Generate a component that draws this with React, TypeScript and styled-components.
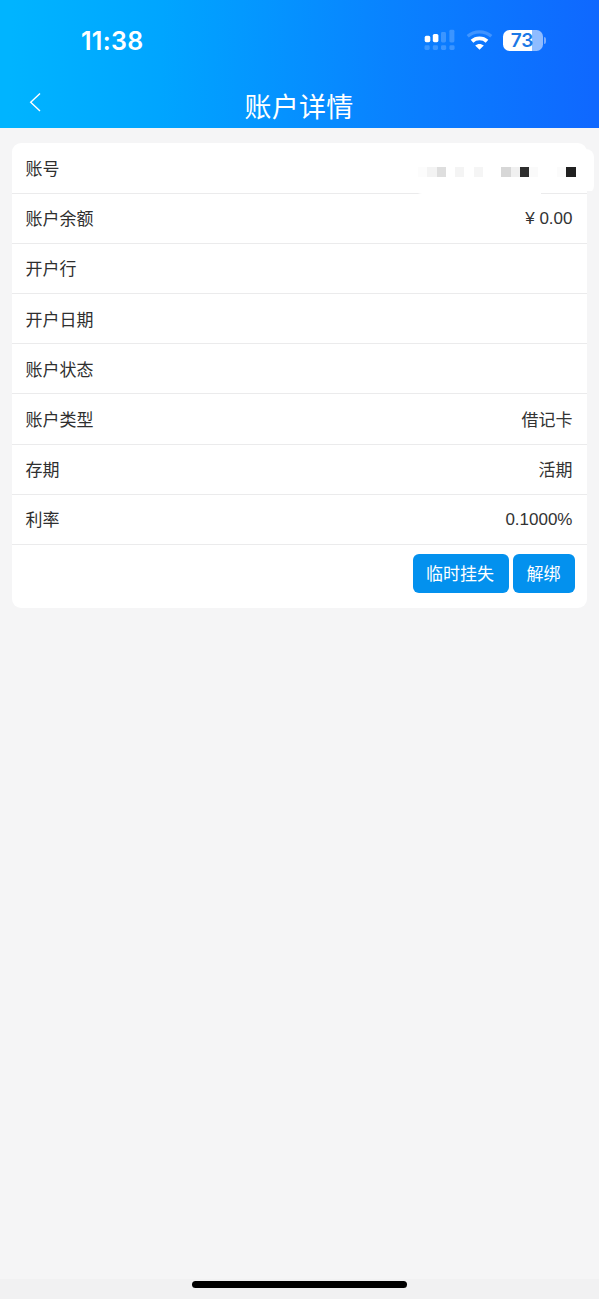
import React from 'react';
import styled, { createGlobalStyle } from 'styled-components';

const GlobalStyle = createGlobalStyle`
  * { box-sizing: border-box; }
  body {
    margin: 0;
    background: #f5f5f6;
    color: #333;
    font-family: 'Liberation Sans', 'Noto Sans CJK SC', sans-serif;
  }
`;

const Screen = styled.div`
  width: 599px;
  height: 1299px;
  display: flex;
  flex-direction: column;
  overflow: hidden;
`;

const Header = styled.header`
  height: 128px;
  flex: none;
  background: linear-gradient(92deg, #00b4ff 2%, #00a5ff 27%, #0982ff 65%, #0f68ff 99%);
  color: #fff;
`;

const StatusBar = styled.div`
  height: 82px;
  padding: 0 53px 0 81px;
  display: flex;
  align-items: center;
  justify-content: space-between;
`;

const Clock = styled.time`
  font: 600 25px/30px Inter, sans-serif;
  letter-spacing: 0.3px;
`;

const StatusIcons = styled.div`
  display: flex;
  align-items: center;
  margin-top: -2px;
`;

const SignalIcon = styled.svg`
  display: block;
  margin-right: 11px;
`;

const WifiIcon = styled.svg`
  display: block;
  margin-right: 10px;
`;

const Battery = styled.div`
  width: 40px;
  height: 21px;
  border-radius: 6.5px;
  background: linear-gradient(90deg, #fff 73%, #8fbcff 73%);
  color: #1b79e6;
  font: 600 19px/21px Inter, sans-serif;
  text-align: center;
  padding-right: 1px;
`;

const BatteryTip = styled.div`
  width: 2px;
  height: 7px;
  margin-left: 1.5px;
  border-radius: 0 2px 2px 0;
  background: #78abff;
`;

const NavBar = styled.div`
  height: 46px;
  padding: 0 28px;
  display: grid;
  grid-template-columns: 24px 1fr 24px;
  align-items: center;
`;

const BackButton = styled.button`
  padding: 0;
  border: 0;
  background: none;
  color: inherit;
  height: 20px;
  margin-top: -6px;
  svg { display: block; }
`;

const Title = styled.h1`
  margin: 6px 1px 0 0;
  text-align: center;
  font-weight: 400;
  font-size: 27px;
  line-height: 40px;
  letter-spacing: 0.2px;
`;

const Card = styled.main`
  margin: 15px 12px 0;
  height: 465px;
  flex: none;
  background: #fff;
  border-radius: 9px;
`;

const Row = styled.div`
  height: 50.2px;
  padding: 3px 14.5px 0 13.5px;
  border-bottom: 1px solid #ebebec;
  display: flex;
  align-items: center;
  justify-content: space-between;
  font-size: 17px;
  line-height: 24px;
  position: relative;

  &:first-child {
    height: 50.6px;
  }
`;

const Label = styled.span`
  color: #2f2f2f;
  padding-top: 1px;
`;

const Value = styled.span<{ $numeric: boolean }>`
  color: #333;
  padding-top: ${({ $numeric }) => ($numeric ? 0 : 1)}px;
  padding-bottom: ${({ $numeric }) => ($numeric ? 1 : 0)}px;
`;

const HiddenNumber = styled.div`
  position: absolute;
  top: 6px;
  right: -7px;
  width: 180px;
  height: 44.6px;
  padding: 18px 18.5px 0 0;
  border-radius: 8px;
  background: linear-gradient(#fff, #fff) 0 0 / 127px 100% no-repeat,
    linear-gradient(#fff, #fff) 100% 0 / 100% 42px no-repeat;
  display: flex;
  justify-content: flex-end;
`;

const Block = styled.i<{ $tone: string }>`
  width: 9.27px;
  height: 9.5px;
  background: ${({ $tone }) => $tone};
`;

const Actions = styled.div`
  padding: 9px 12px 0;
  display: flex;
  justify-content: flex-end;
  gap: 4.5px;
`;

const ActionButton = styled.button<{ $width: number }>`
  width: ${({ $width }) => $width}px;
  height: 39px;
  padding: 2px 1px 0 0;
  border: 0;
  border-radius: 6px;
  background: #0391ee;
  color: #fff;
  font: 400 17px/37px 'Liberation Sans', 'Noto Sans CJK SC', sans-serif;
`;

const HomeArea = styled.footer`
  height: 20px;
  margin-top: auto;
  padding-top: 2px;
  background: #f1f1f2;
`;

const HomeIndicator = styled.div`
  width: 215px;
  height: 7px;
  margin: 0 auto;
  border-radius: 4px;
  background: #000;
`;

const blocks = [
  '#fcfcfc', '#f3f3f3', '#dedede', '#fff', '#f4f4f4', '#fff', '#f5f5f5', '#fff', '#fff',
  '#d7d7d7', '#f0f0f0', '#2e2e2e', '#fafafa', '#fff', '#fff', '#fbfbfb', '#202020',
];

const rows = [
  { label: '账户余额', value: '¥ 0.00', numeric: true },
  { label: '开户行', value: '' },
  { label: '开户日期', value: '' },
  { label: '账户状态', value: '' },
  { label: '账户类型', value: '借记卡' },
  { label: '存期', value: '活期' },
  { label: '利率', value: '0.1000%', numeric: true },
];

export default function App() {
  return (
    <Screen>
      <GlobalStyle />
      <Header>
        <StatusBar>
          <Clock>11:38</Clock>
          <StatusIcons>
            <SignalIcon width="31" height="22" viewBox="0 0 31 22" fill="#fff">
              <rect x="0.7" y="6.8" width="5.6" height="6.4" rx="1.6" />
              <rect x="8.8" y="5" width="5.6" height="8.2" rx="1.6" />
              <g opacity="0.2">
                <rect x="17" y="3" width="5" height="10.5" rx="1.4" />
                <rect x="25.4" y="0.8" width="5" height="12.7" rx="1.4" />
                <rect x="0.5" y="16.3" width="5.2" height="4.6" rx="1.4" />
                <rect x="8.8" y="16.3" width="5.2" height="4.6" rx="1.4" />
                <rect x="17" y="16.3" width="5.2" height="4.6" rx="1.4" />
                <rect x="25.4" y="16.3" width="5.2" height="4.6" rx="1.4" />
              </g>
            </SignalIcon>
            <WifiIcon width="27" height="20" viewBox="0 0 27 20" fill="none">
              <path d="M1.7 6.3C8.3 .3 18.7 .3 25.3 6.3" stroke="#fff" strokeWidth="3.2" opacity="0.22" />
              <path d="M6 11.2C10.1 7.4 16.9 7.4 21 11.2" stroke="#fff" strokeWidth="3.9" />
              <path d="M13.5 19.8L9.2 15.6C11.6 13.4 15.4 13.4 17.8 15.6Z" fill="#fff" />
            </WifiIcon>
            <Battery>73</Battery>
            <BatteryTip />
          </StatusIcons>
        </StatusBar>
        <NavBar>
          <BackButton aria-label="返回">
            <svg width="14" height="20" viewBox="0 0 14 20" fill="none" stroke="#fff" strokeWidth="1.4">
              <path d="M12 1.5L2.7 10.2L12 19" />
            </svg>
          </BackButton>
          <Title>账户详情</Title>
        </NavBar>
      </Header>
      <Card>
        <Row>
          <Label>账号</Label>
          <HiddenNumber>
            {blocks.map((tone, i) => <Block key={i} $tone={tone} />)}
          </HiddenNumber>
        </Row>
        {rows.map(({ label, value, numeric = false }) => (
          <Row key={label}>
            <Label>{label}</Label>
            <Value $numeric={numeric}>{value}</Value>
          </Row>
        ))}
        <Actions>
          <ActionButton $width={96}>临时挂失</ActionButton>
          <ActionButton $width={62}>解绑</ActionButton>
        </Actions>
      </Card>
      <HomeArea>
        <HomeIndicator />
      </HomeArea>
    </Screen>
  );
}
